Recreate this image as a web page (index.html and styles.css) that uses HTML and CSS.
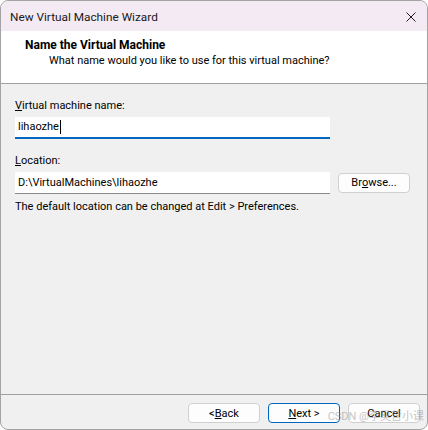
FILE: index.html
```html
<!DOCTYPE html>
<html>
<head>
<meta charset="utf-8">
<link rel="stylesheet" href="styles.css">
</head>
<body>
<div class="window">
  <div class="titlebar">
    <span class="title">New Virtual Machine Wizard</span>
    <svg class="close" width="10" height="10" viewBox="0 0 10 10"><path d="M0.5 0.5 L9.5 9.5 M9.5 0.5 L0.5 9.5" stroke="#1a1a1a" stroke-width="1"/></svg>
  </div>
  <div class="header">
    <div class="h-title">Name the Virtual Machine</div>
    <div class="h-sub">What name would you like to use for this virtual machine?</div>
  </div>
  <div class="body">
    <div class="label"><u>V</u>irtual machine name:</div>
    <div class="input active"><span>lihaozhe</span><span class="caret"></span></div>
    <div class="label loc"><u>L</u>ocation:</div>
    <div class="loc-row">
      <div class="input plain"><span>D:\VirtualMachines\lihaozhe</span></div>
      <div class="btn browse">Br<u>o</u>wse...</div>
    </div>
    <div class="note">The default location can be changed at Edit &gt; Preferences.</div>
  </div>
  <div class="footer">
    <div class="btn">&lt; <u>B</u>ack</div>
    <div class="btn default"><u>N</u>ext &gt;</div>
    <div class="btn">Cancel</div>
    <div class="watermark">CSDN @李昊哲小课</div>
  </div>
</div>
</body>
</html>
```
FILE: styles.css
```css
* { box-sizing: border-box; }
html, body { margin: 0; padding: 0; background: #ffffff; }
body {
  font-family: Roboto, "Noto Sans CJK SC", sans-serif;
  font-size: 11px;
  color: #000;
}
.window {
  position: relative;
  width: 428px;
  height: 430px;
  border: 1px solid #a3a3a3;
  border-radius: 8px;
  overflow: hidden;
  background: #f0f0f0;
  display: flex;
  flex-direction: column;
}
.titlebar {
  height: 30px;
  flex: none;
  background: #f4eaf4;
  display: flex;
  align-items: center;
  justify-content: space-between;
  padding: 1px 11px 0 9px;
}
.title { font-size: 11.8px; color: #1a1a1a; }
.close { display: block; }
.header {
  flex: none;
  height: 53px;
  background: #ffffff;
  border-bottom: 1px solid #a0a0a0;
  padding: 6px 0 0 24px;
  line-height: 16px;
}
.h-title { font-weight: bold; font-size: 12px; }
.h-sub { padding-left: 24px; }
.body {
  flex: 1;
  padding: 14px 0 0 14px;
  display: flex;
  flex-direction: column;
  border-bottom: 1px solid #a0a0a0;
  line-height: 16px;
}
.label { height: 16px; }
.label.loc { margin-top: 14px; }
.input {
  width: 315px;
  height: 22px;
  background: #fff;
  display: flex;
  align-items: center;
  padding-left: 3px;
}
.input.active {
  margin-top: 3px;
  border-bottom: 2px solid #0067c0;
}
.input.plain { border-bottom: 1px solid #8a8a8a; height: 22px; }
.caret {
  display: inline-block;
  width: 1px;
  height: 14px;
  background: #000;
  margin-left: 1px;
}
.loc-row {
  margin-top: 3px;
  display: flex;
  align-items: flex-start;
  gap: 8px;
}
.btn {
  width: 72px;
  height: 20px;
  border: 1px solid #d0d0d0;
  border-radius: 4px;
  background: #fdfdfd;
  display: flex;
  align-items: center;
  justify-content: center;
}
.browse { margin-top: 1px; }
.note { margin-top: 5px; }
.footer {
  flex: none;
  height: 34px;
  display: flex;
  justify-content: flex-end;
  padding: 8px 7px 0 0;
  gap: 8px;
}
.btn.default { border-color: #0067c0; }
.watermark {
  position: absolute;
  right: 3px;
  bottom: 6px;
  font-size: 11px;
  color: rgba(140, 140, 140, 0.5);
  pointer-events: none;
}
```
